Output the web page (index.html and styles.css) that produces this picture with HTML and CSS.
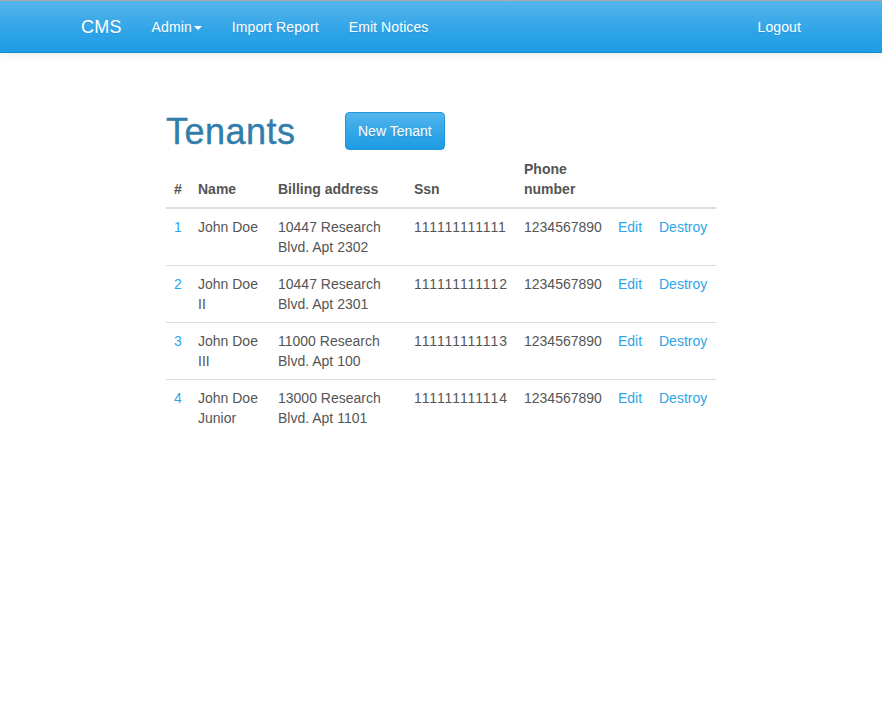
FILE: index.html
```html
<!DOCTYPE html>
<html>
<head>
<meta charset="utf-8">
<title>CMS</title>
<link rel="stylesheet" href="styles.css">
</head>
<body>
<nav class="navbar">
  <div class="nav-inner">
    <a class="brand" href="#">CMS</a>
    <ul class="nav">
      <li><a href="#">Admin<span class="caret"></span></a></li>
      <li><a href="#">Import Report</a></li>
      <li><a href="#">Emit Notices</a></li>
    </ul>
    <ul class="nav nav-right">
      <li><a href="#">Logout</a></li>
    </ul>
  </div>
</nav>
<main class="main">
  <div class="title-row">
    <h1 class="title">Tenants</h1>
    <a class="btn" href="#">New Tenant</a>
  </div>
  <table class="table">
    <colgroup>
      <col class="c-id"><col class="c-name"><col class="c-addr"><col class="c-ssn"><col class="c-phone"><col class="c-edit"><col class="c-destroy">
    </colgroup>
    <thead>
      <tr><th>#</th><th>Name</th><th>Billing address</th><th>Ssn</th><th>Phone number</th><th></th><th></th></tr>
    </thead>
    <tbody>
      <tr><td><a href="#">1</a></td><td>John Doe</td><td>10447 Research Blvd. Apt 2302</td><td class="ssn">111111111111</td><td>1234567890</td><td><a href="#">Edit</a></td><td><a href="#">Destroy</a></td></tr>
      <tr><td><a href="#">2</a></td><td>John Doe II</td><td>10447 Research Blvd. Apt 2301</td><td class="ssn">111111111112</td><td>1234567890</td><td><a href="#">Edit</a></td><td><a href="#">Destroy</a></td></tr>
      <tr><td><a href="#">3</a></td><td>John Doe III</td><td>11000 Research Blvd. Apt 100</td><td class="ssn">111111111113</td><td>1234567890</td><td><a href="#">Edit</a></td><td><a href="#">Destroy</a></td></tr>
      <tr><td><a href="#">4</a></td><td>John Doe Junior</td><td>13000 Research Blvd. Apt 1101</td><td class="ssn">111111111114</td><td>1234567890</td><td><a href="#">Edit</a></td><td><a href="#">Destroy</a></td></tr>
    </tbody>
  </table>
</main>
</body>
</html>
```

FILE: styles.css
```css
* { box-sizing: border-box; }
html, body { margin: 0; padding: 0; }
body {
  font-family: "Liberation Sans", Arial, Helvetica, sans-serif;
  font-size: 14px;
  line-height: 20px;
  color: #555555;
  background: #ffffff;
}
a { color: #2fa4e7; text-decoration: none; }

.navbar {
  border-top: 1px solid #a9a9a9;
  background-image: linear-gradient(#54b4eb, #2fa4e7 60%, #1d9ce5);
  border-bottom: 1px solid #178acc;
  box-shadow: 0 1px 10px rgba(0, 0, 0, 0.1);
  height: 53px;
}
.nav-inner {
  width: 750px;
  margin: 0 auto;
  padding: 0 15px;
  display: flex;
  align-items: stretch;
  height: 51px;
}
.brand {
  color: #fff;
  font-size: 18px;
  line-height: 20px;
  padding: 16px 15px 15px 0;
  letter-spacing: 0.2px;
  text-shadow: 0 1px 0 rgba(0, 0, 0, 0.1);
}
.nav {
  list-style: none;
  margin: 0;
  padding: 0;
  display: flex;
}
.nav a {
  display: block;
  color: #fff;
  padding: 16px 15px 15px;
  line-height: 20px;
  letter-spacing: 0.1px;
  text-shadow: 0 1px 0 rgba(0, 0, 0, 0.1);
}
.nav-right { margin-left: auto; }
.nav-right a { padding-right: 0; }
.caret {
  display: inline-block;
  width: 0;
  height: 0;
  margin-left: 2px;
  vertical-align: middle;
  border-top: 4px solid #fff;
  border-left: 4px solid transparent;
  border-right: 4px solid transparent;
}

.main {
  width: 550px;
  margin: 0 auto;
  padding-top: 59px;
}
.title-row {
  display: flex;
  align-items: center;
  height: 39px;
}
.title {
  margin: 0;
  width: 179px;
  font-size: 36px;
  line-height: 39.6px;
  font-weight: 500;
  letter-spacing: 0.5px;
  color: #317eac;
  -webkit-text-stroke: 0.4px #317eac;
}
.btn {
  display: inline-block;
  color: #fff;
  font-size: 14px;
  line-height: 20px;
  padding: 8px 12px;
  border: 1px solid #2196dc;
  border-radius: 4px;
  background-image: linear-gradient(#54b4eb, #2fa4e7 60%, #1d9ce5);
  text-shadow: 0 1px 0 rgba(0, 0, 0, 0.1);
  align-self: flex-start;
}

.table {
  width: 550px;
  table-layout: fixed;
  border-collapse: collapse;
  border-spacing: 0;
}
.c-id { width: 24px; }
.c-name { width: 80px; }
.c-addr { width: 136px; }
.c-ssn { width: 110px; }
.c-phone { width: 94px; }
.c-edit { width: 41px; }
.c-destroy { width: 65px; }
.table th, .table td {
  padding: 8px;
  text-align: left;
  line-height: 20px;
}
.table th {
  font-weight: bold;
  vertical-align: bottom;
  border-bottom: 2px solid #dddddd;
}
.table td {
  vertical-align: top;
  border-top: 1px solid #dddddd;
}
.table td.ssn { letter-spacing: 0.9px; }
.table tbody tr:first-child td { border-top: 0; }
```
